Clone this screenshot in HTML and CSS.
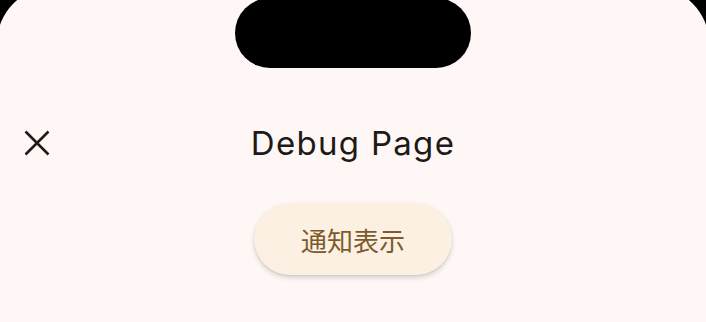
FILE: index.html
```html
<!DOCTYPE html>
<html lang="ja">
<head>
  <meta charset="UTF-8" />
  <title>Debug Page</title>
  <meta name="viewport" content="width=device-width, initial-scale=1.0" />
  <link rel="stylesheet" href="styles.css">
</head>
<body>
  <div class="screen">
    <!-- カメラの切り欠き -->
    <div class="notch"></div>

    <div class="status-space"></div>

    <header class="appbar">
      <button class="close" aria-label="閉じる">
        <svg viewBox="0 0 26 26" width="26" height="26">
          <path d="M1.5 1.5 L24.5 24.5 M24.5 1.5 L1.5 24.5" stroke="#201a17" stroke-width="2.6" fill="none" />
        </svg>
      </button>
      <h1>Debug Page</h1>
      <span></span>
    </header>

    <div class="content">
      <button class="notify">通知表示</button>
    </div>
  </div>
</body>
</html>
```

FILE: styles.css
```css
html, body { height: 100%; }
body {
  margin: 0;
  background: #000;
  overflow: hidden;
  font-family: Inter, "Noto Sans CJK JP", sans-serif;
}
.screen {
  position: relative;
  box-sizing: border-box;
  height: calc(100vh + 13px);
  margin: -13px -3px 0;
  padding: 13px 3px 0;
  background: #fef7f5;
  border-radius: 56px 56px 0 0;
}
.notch {
  position: absolute;
  top: 11px;
  left: 238px;
  width: 236px;
  height: 70px;
  border-radius: 35px;
  background: #000;
}
.status-space { height: 113px; }
.appbar {
  display: grid;
  grid-template-columns: 1fr auto 1fr;
  align-items: center;
  height: 60px;
  padding: 0 24px;
}
.appbar h1 {
  margin: 0;
  font-size: 33px;
  font-weight: 400;
  color: #201a17;
  letter-spacing: 1.3px;
}
.close {
  justify-self: start;
  background: none;
  border: none;
  padding: 0;
  width: 26px;
  height: 26px;
  cursor: pointer;
}
.close svg { display: block; }
.content {
  display: flex;
  justify-content: center;
  padding-top: 30px;
}
.notify {
  width: 198px;
  height: 72px;
  border: none;
  border-radius: 36px;
  background: #fcf0e2;
  color: #7d5a2c;
  font-family: "Noto Sans CJK JP", sans-serif;
  font-size: 26px;
  box-shadow: 0 3px 5px rgba(0,0,0,0.14), 0 1px 2px rgba(0,0,0,0.08);
  cursor: pointer;
}
```
